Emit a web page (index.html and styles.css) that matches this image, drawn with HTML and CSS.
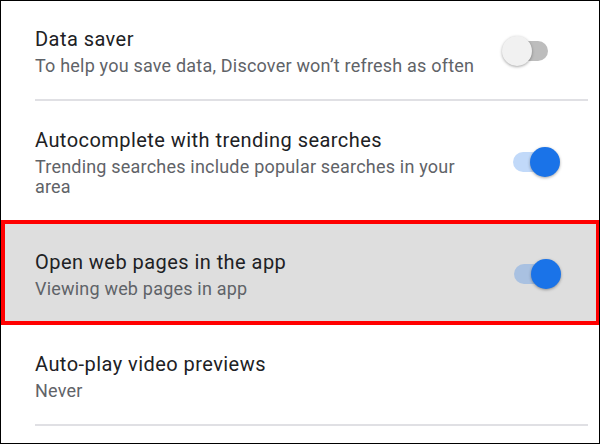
FILE: index.html
```html
<!DOCTYPE html>
<html lang="en">
<head>
<meta charset="utf-8">
<title>Settings</title>
<link rel="stylesheet" href="styles.css">
</head>
<body>
<div class="screen">
  <div class="row">
    <div class="text">
      <div class="title">Data saver</div>
      <div class="sub">To help you save data, Discover won’t refresh as often</div>
    </div>
    <div class="switch off"><span class="track"></span><span class="thumb"></span></div>
  </div>
  <div class="divider"></div>
  <div class="row row-b">
    <div class="text">
      <div class="title">Autocomplete with trending searches</div>
      <div class="sub">Trending searches include popular searches in your area</div>
    </div>
    <div class="switch on"><span class="track"></span><span class="thumb"></span></div>
  </div>
  <div class="row highlight">
    <div class="text">
      <div class="title">Open web pages in the app</div>
      <div class="sub">Viewing web pages in app</div>
    </div>
    <div class="switch on"><span class="track"></span><span class="thumb"></span></div>
  </div>
  <div class="row row-d">
    <div class="text">
      <div class="title">Auto-play video previews</div>
      <div class="sub">Never</div>
    </div>
  </div>
  <div class="divider"></div>
</div>
</body>
</html>
```

FILE: styles.css
```css
* { box-sizing: border-box; }
html, body { margin: 0; padding: 0; background: #ffffff; }
.screen {
  width: 600px;
  height: 444px;
  border: 1px solid #000000;
  background: #ffffff;
  font-family: Roboto, "Noto Sans", Arial, sans-serif;
  overflow: hidden;
}
.row {
  display: flex;
  align-items: center;
  gap: 20px;
  padding: 25px 39px 23px 34px;
}
.row-b { padding: 26px 39px 23px 34px; }
.row-d { padding: 26px 39px 23px 34px; }
.highlight {
  background: #dedede;
  border: 4px solid #ff0000;
  margin-right: -1px;
  padding: 25px 35px 22px 30px;
}
.text { flex: 1; min-width: 0; }
.title {
  font-size: 20px;
  line-height: 26px;
  letter-spacing: 0.45px;
  color: #202124;
}
.sub {
  margin-top: 4px;
  font-size: 18px;
  line-height: 20px;
  letter-spacing: 0.2px;
  color: #5f6368;
}
.divider {
  height: 2px;
  background: #e0e0e4;
  margin: 0 11px 0 34px;
}
.switch {
  position: relative;
  flex: none;
  width: 58px;
  height: 30px;
}
.track {
  position: absolute;
  left: 11px;
  top: 5px;
  width: 35px;
  height: 20px;
  border-radius: 10px;
}
.thumb {
  position: absolute;
  top: 0;
  width: 30px;
  height: 30px;
  border-radius: 50%;
  box-shadow: 0 1px 3px rgba(0, 0, 0, 0.35);
}
.off .track { background: #bdbdbd; }
.off .thumb { left: 0; background: #f1f1f1; }
.on .track { background: rgba(26, 115, 232, 0.27); }
.on .thumb { left: 28px; background: #1a73e8; }
```
